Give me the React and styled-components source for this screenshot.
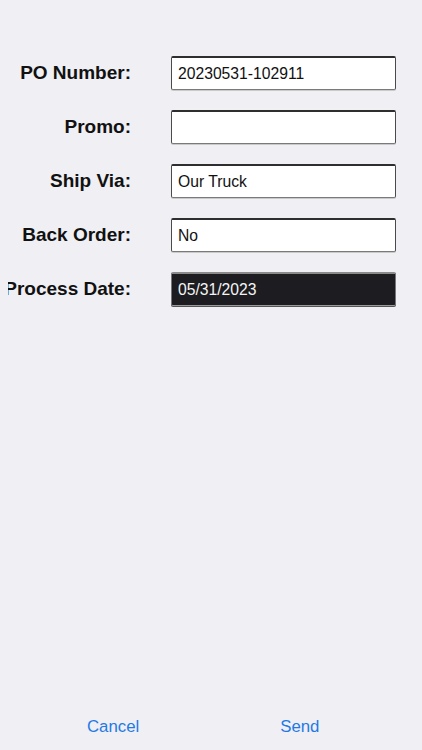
import React from "react";
import styled, { createGlobalStyle } from "styled-components";

const Global = createGlobalStyle`
  html, body { margin: 0; padding: 0; background: #efeff4; }
  * { box-sizing: border-box; }
`;

const Page = styled.div`
  min-height: 750px;
  height: 750px;
  display: flex;
  flex-direction: column;
  background: #efeff4;
  font-family: "Liberation Sans", Arial, sans-serif;
`;

const Form = styled.div`
  display: flex;
  flex-direction: column;
  gap: 20px;
  padding: 56px 0 0 8px;
`;

const Row = styled.div`
  display: flex;
  align-items: center;
  height: 34px;
`;

const Label = styled.div`
  width: 123px;
  display: flex;
  justify-content: flex-end;
  overflow: hidden;
  white-space: nowrap;
  font-size: 19px;
  font-weight: 700;
  color: #111;
`;

const Field = styled.div`
  margin-left: 40px;
  width: 225px;
  height: 34px;
  display: flex;
  align-items: center;
  padding-left: 6px;
  font-size: 15.7px;
  border-radius: 2px;
  background: ${(p) => (p.$dark ? "#1d1c20" : "#ffffff")};
  color: ${(p) => (p.$dark ? "#f4f4f4" : "#111")};
  border-top: 2px solid ${(p) => (p.$dark ? "#8a8a8a" : "#2e2e2e")};
  border-left: 1px solid ${(p) => (p.$dark ? "#777" : "#4a4a4a")};
  border-right: 1px solid ${(p) => (p.$dark ? "#777" : "#4a4a4a")};
  border-bottom: 1px solid ${(p) => (p.$dark ? "#9a9a9a" : "#7a7a7a")};
  box-shadow: ${(p) => (p.$dark ? "0 1px 0 #555" : "0 1px 0 #c9c9c9")};
`;

const Footer = styled.div`
  margin-top: auto;
  display: flex;
  align-items: center;
  gap: 141px;
  padding: 0 0 0 87px;
  height: 46px;
`;

const Action = styled.button`
  background: none;
  border: none;
  padding: 0;
  font-family: "Liberation Sans", Arial, sans-serif;
  font-size: 16.8px;
  color: #1f7ae4;
  cursor: pointer;
`;

const rows = [
  { label: "PO Number:", value: "20230531-102911" },
  { label: "Promo:", value: "" },
  { label: "Ship Via:", value: "Our Truck" },
  { label: "Back Order:", value: "No" },
  { label: "Process Date:", value: "05/31/2023", dark: true },
];

export default function App() {
  return (
    <Page>
      <Global />
      <Form>
        {rows.map((r) => (
          <Row key={r.label}>
            <Label>{r.label}</Label>
            <Field $dark={r.dark}>{r.value}</Field>
          </Row>
        ))}
      </Form>
      <Footer>
        <Action>Cancel</Action>
        <Action>Send</Action>
      </Footer>
    </Page>
  );
}
